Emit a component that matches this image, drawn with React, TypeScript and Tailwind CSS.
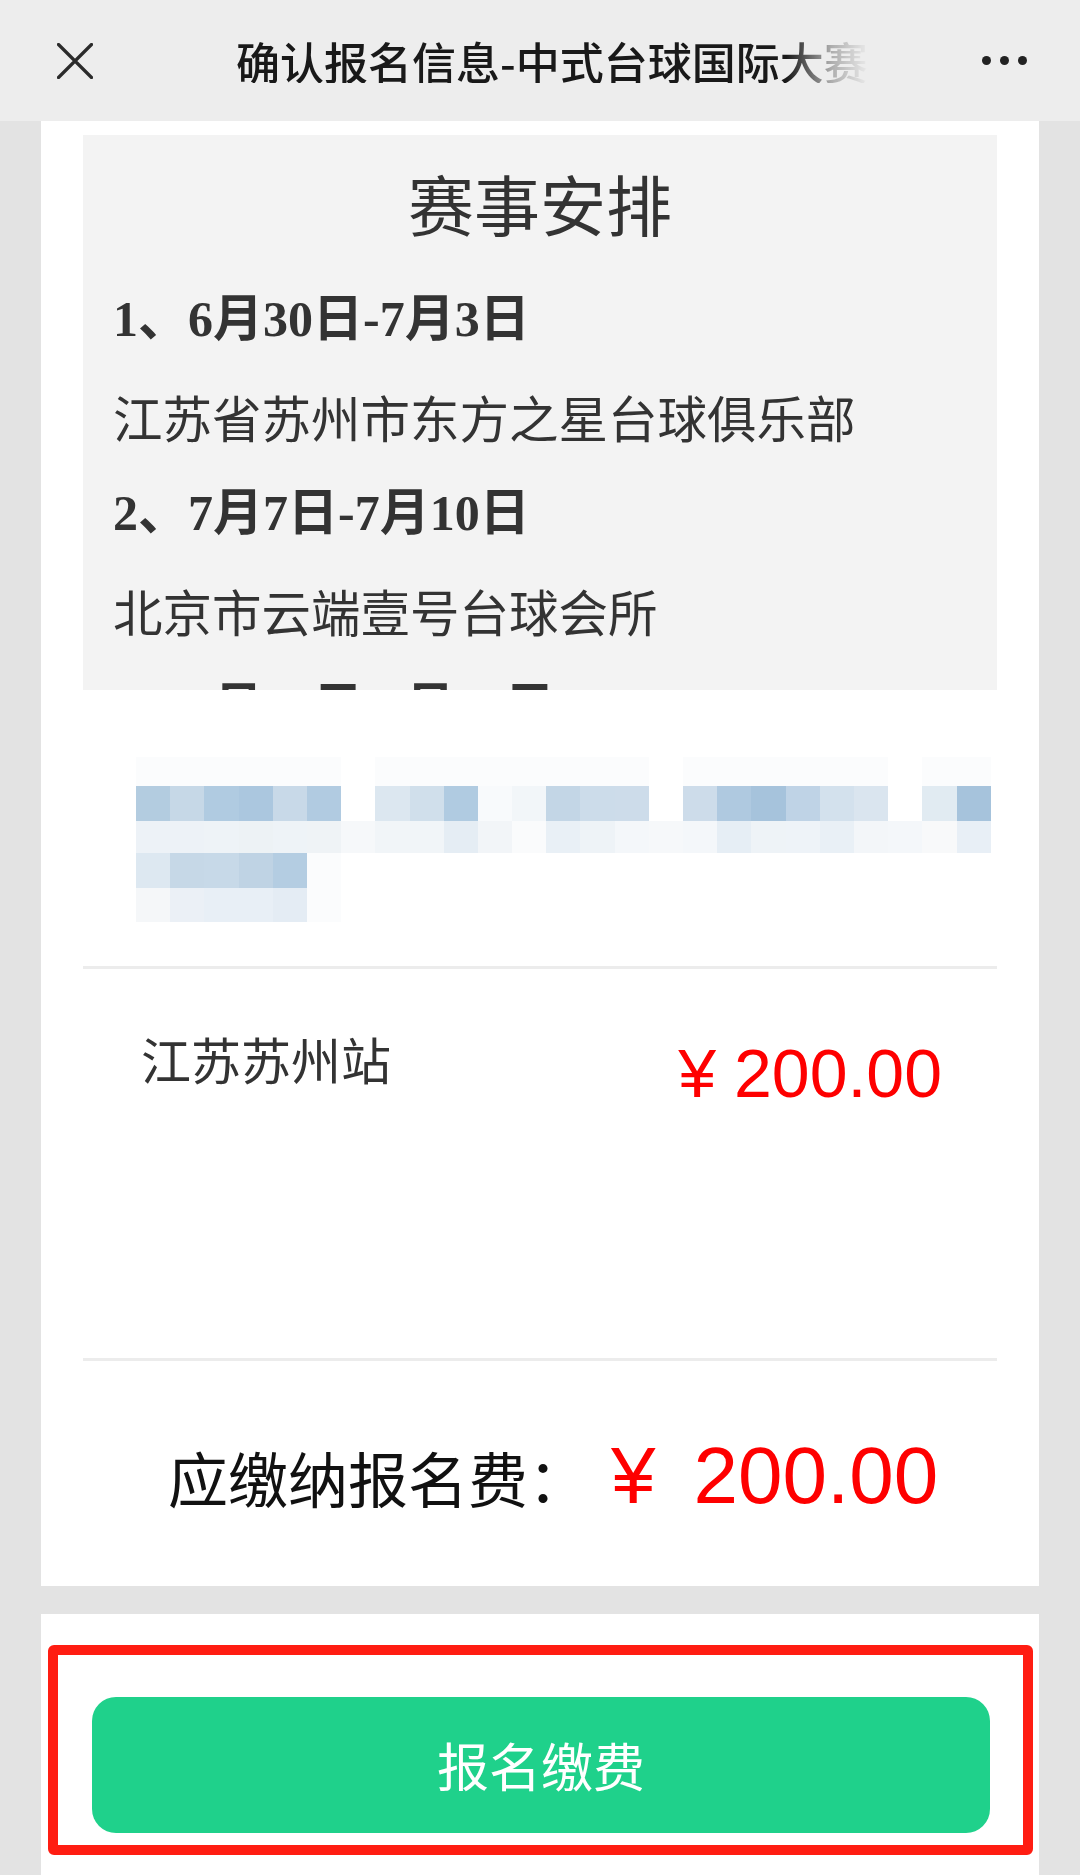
import React from "react";

const schedule = [
  { date: "1、6月30日-7月3日", place: "江苏省苏州市东方之星台球俱乐部" },
  { date: "2、7月7日-7月10日", place: "北京市云端壹号台球会所" },
  { date: "3、7月14日-7月17日", place: "" },
];

// pixelated (mosaic) block, one colour per cell
const W = "#ffffff";
const F = "#fbfcfd";
const mosaicRows: { h: number; cells: string[] }[] = [
  {
    h: 29,
    cells: [F, F, F, F, F, F, W, F, F, F, F, F, F, F, F, W, F, F, F, F, F, F, W, F, F],
  },
  {
    h: 35,
    cells: [
      "#b3cce0", "#c6d8e7", "#b0cbe1", "#abc7df", "#c8d9e8", "#b1cbe1", W,
      "#dce7f0", "#d0dfeb", "#b0cbe1", "#f8fafc", "#f2f6f9", "#c3d6e6", "#ccdcea",
      "#cddcea", W, "#cddcea", "#afc9e0", "#a6c3dc", "#bfd3e6", "#d3e1ed",
      "#dae5ef", W, "#e1ebf2", "#a6c3dc",
    ],
  },
  {
    h: 32,
    cells: [
      "#edf2f7", "#edf2f7", "#eef3f7", "#edf2f5", "#eef3f7", "#eff3f6", "#f6f8fa",
      "#f1f5f8", "#f1f5f8", "#e5edf4", "#f2f5f8", "#fafbfc", "#e9f0f6", "#eef3f7",
      "#f4f7fa", "#f6f8fa", "#f4f7fa", "#e6eef5", "#eef3f7", "#eef3f8", "#e9f0f6",
      "#f3f6f9", "#f4f7fa", "#f8f9fa", "#e8eff6",
    ],
  },
  { h: 35, cells: ["#dde8f1", "#c6d8e7", "#c7d9e8", "#bfd3e4", "#b4cde2", F] },
  { h: 34, cells: ["#f5f7f9", "#ebf0f6", "#e8eff6", "#e8eff6", "#e4ecf4", F] },
];

function Mosaic() {
  return (
    <div className="ml-[53px] mt-[67px] flex flex-col">
      {mosaicRows.map((row, r) => (
        <div key={r} className="flex">
          {row.cells.map((c, i) => (
            <div
              key={i}
              className="w-[34.2px]"
              style={{ height: row.h, backgroundColor: c }}
            />
          ))}
        </div>
      ))}
    </div>
  );
}

export default function App() {
  return (
    <div className="min-h-[1875px] w-[1080px] overflow-hidden bg-[#e3e3e3] font-['Noto_Sans_CJK_SC',sans-serif]">
      <header className="flex h-[121px] items-center bg-[#ededed]">
        <svg
          className="ml-[57px] h-[36px] w-[36px]"
          viewBox="0 0 36 36"
          fill="none"
          stroke="#2b2b2b"
          strokeWidth={3.2}
          strokeLinecap="round"
        >
          <path d="M1.5 1.5L34.5 34.5M34.5 1.5L1.5 34.5" />
        </svg>
        <div className="ml-[143px] w-[640px] overflow-hidden whitespace-nowrap text-[44px] font-medium leading-none text-[#191919] [mask-image:linear-gradient(to_right,#000_86%,rgba(0,0,0,0.3)_93%,transparent_99%)] [-webkit-mask-image:linear-gradient(to_right,#000_86%,rgba(0,0,0,0.3)_93%,transparent_99%)]">
          确认报名信息-中式台球国际大赛
        </div>
        <div className="ml-auto mr-[53px] flex gap-[9px]">
          <span className="h-[9px] w-[9px] rounded-full bg-[#222]" />
          <span className="h-[9px] w-[9px] rounded-full bg-[#222]" />
          <span className="h-[9px] w-[9px] rounded-full bg-[#222]" />
        </div>
      </header>

      <div className="mx-[41px] bg-white">
        <div className="mx-[42px] pt-[14px]">
          <div className="h-[555px] overflow-hidden bg-[#f3f3f3] px-[30px] pt-[19px] text-[#333]">
            <h2 className="mb-[21px] text-center text-[66px] leading-[96px]">赛事安排</h2>
            {schedule.map((s) => (
              <div key={s.date}>
                <p className="whitespace-nowrap font-['Liberation_Serif','Noto_Sans_CJK_SC',serif] text-[50px] font-bold leading-[97px]">
                  {s.date}
                </p>
                {s.place && (
                  <p className="whitespace-nowrap text-[49.5px] leading-[97px]">{s.place}</p>
                )}
              </div>
            ))}
          </div>

          <Mosaic />

          <div className="mt-[44px] h-[3px] bg-[#ececec]" />

          <div className="flex h-[389px] items-start justify-between pl-[58px] pr-[55px]">
            <span className="mt-[52px] text-[50px] leading-[75px] text-[#333]">江苏苏州站</span>
            <span className="mt-[70px] flex font-['Liberation_Sans',sans-serif] text-[68px] leading-none text-[#fe0000]">
              <span>¥</span>
              <span className="ml-[18px]">200.00</span>
            </span>
          </div>

          <div className="h-[3px] bg-[#ececec]" />

          <div className="flex items-baseline pb-[70px] pl-[85px] pt-[75px]">
            <span className="text-[60px] leading-none text-[#111]">应缴纳报名费：</span>
            <span className="ml-[23px] font-['Liberation_Sans',sans-serif] text-[80px] leading-none text-[#fe0000]">
              ¥<span className="ml-[38px]">200.00</span>
            </span>
          </div>
        </div>
      </div>

      <div className="mx-[41px] mt-[28px] bg-white pb-[22px] pt-[31px]">
        <div className="ml-[7px] mr-[6px] rounded-[6px] border-[10px] border-[#ff1d12] pb-[12px] pl-[34px] pr-[33px] pt-[42px]">
          <button className="flex h-[136px] w-full items-center justify-center rounded-[24px] bg-[#1fd18b] text-[52px] text-white">
            报名缴费
          </button>
        </div>
      </div>
    </div>
  );
}
